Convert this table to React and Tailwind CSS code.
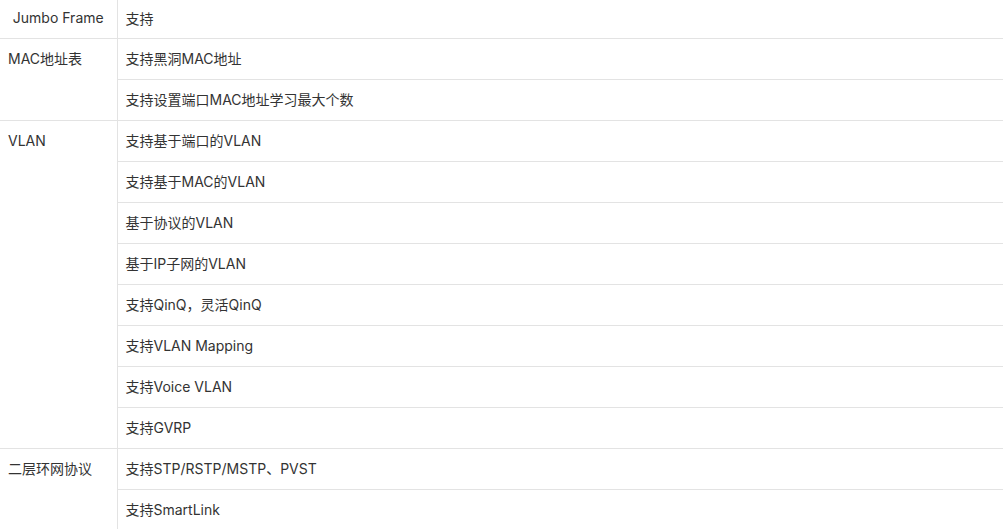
import React from "react";

const groups = [
    { name: "Jumbo Frame", center: true, items: ["支持"] },
    { name: "MAC地址表", items: ["支持黑洞MAC地址", "支持设置端口MAC地址学习最大个数"] },
    {
        name: "VLAN",
        items: [
            "支持基于端口的VLAN",
            "支持基于MAC的VLAN",
            "基于协议的VLAN",
            "基于IP子网的VLAN",
            "支持QinQ，灵活QinQ",
            "支持VLAN Mapping",
            "支持Voice VLAN",
            "支持GVRP",
        ],
    },
    { name: "二层环网协议", items: ["支持STP/RSTP/MSTP、PVST", "支持SmartLink"] },
];

function App() {
    return (
        <div
            className="w-[1003px] h-[529px] overflow-hidden bg-white text-[14px] text-[#333]"
            style={{ fontFamily: 'Inter, "Noto Sans CJK SC", sans-serif' }}
        >
            <table className="w-full border-collapse">
                <tbody>
                    {groups.map((g, gi) =>
                        g.items.map((item, i) => (
                            <tr key={gi + "-" + i}>
                                {i === 0 && (
                                    <td
                                        rowSpan={g.items.length}
                                        className={
                                            "w-[117px] border-r border-b border-[#e3e3e3] px-2 align-top leading-5 " +
                                            (gi === 0 ? "pt-[8px] text-center" : "pt-[10px]")
                                        }
                                    >
                                        {g.name}
                                    </td>
                                )}
                                <td
                                    className={
                                        "border-b border-[#e3e3e3] px-2 leading-5 " +
                                        (gi === 0 ? "h-[38px]" : "h-[41px]")
                                    }
                                >
                                    {item}
                                </td>
                            </tr>
                        ))
                    )}
                </tbody>
            </table>
        </div>
    );
}

export default App;
